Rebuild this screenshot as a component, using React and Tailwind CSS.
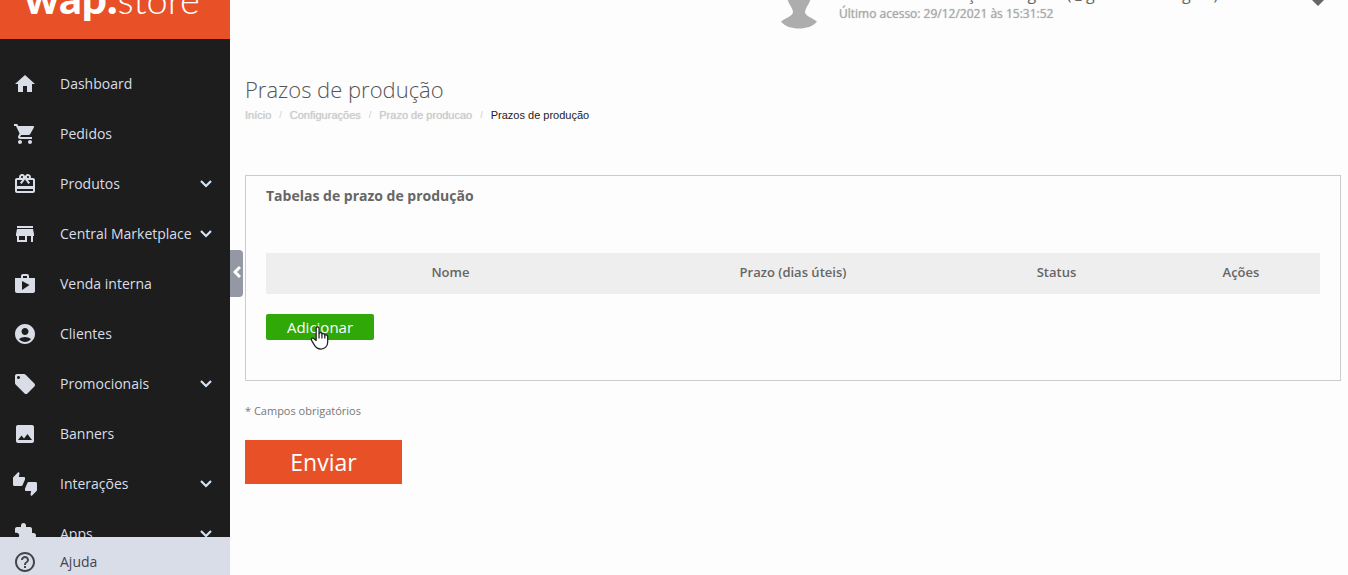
import React, { useState } from "react";
import {
  MdAccountCircle,
  MdCardGiftcard,
  MdExtension,
  MdHelpOutline,
  MdHome,
  MdImage,
  MdLocalOffer,
  MdShop,
  MdShoppingCart,
  MdStore,
  MdThumbsUpDown,
} from "react-icons/md";

const menu = [
  { label: "Dashboard", icon: MdHome },
  { label: "Pedidos", icon: MdShoppingCart },
  { label: "Produtos", icon: MdCardGiftcard, sub: true },
  { label: "Central Marketplace", icon: MdStore, sub: true },
  { label: "Venda interna", icon: MdShop },
  { label: "Clientes", icon: MdAccountCircle },
  { label: "Promocionais", icon: MdLocalOffer, sub: true },
  { label: "Banners", icon: MdImage },
  { label: "Interações", icon: MdThumbsUpDown, sub: true },
  { label: "Apps", icon: MdExtension, sub: true },
];

const crumbs = ["Início", "Configurações", "Prazo de producao"];

const columns = [
  { label: "Nome", width: "w-[35%]" },
  { label: "Prazo (dias úteis)", width: "w-[30%]" },
  { label: "Status", width: "w-[20%]" },
  { label: "Ações", width: "w-[15%]" },
];

const MenuItem = ({ label, icon: Icon, sub }) => (
  <li>
    <a href="#" className="flex h-[50px] items-center pl-[13px] pr-[18px] text-sm text-[#d9dde8]">
      <Icon className="size-6 shrink-0" />
      <span className="ml-[23px] flex-1 whitespace-nowrap">{label}</span>
      {sub && (
        <svg viewBox="0 0 12 8" className="h-2 w-3 shrink-0" fill="none" stroke="#d4e4f7" strokeWidth="2.200">
          <path d="m1 1 5 5 5-5" />
        </svg>
      )}
    </a>
  </li>
);

const Sidebar = () => (
  <aside className="flex w-[230px] shrink-0 flex-col bg-[#1d1d1d]">
    {/* Logo */}
    <div className="flex h-[39px] shrink-0 items-end overflow-hidden bg-[#e85127] pb-[22px] pl-6">
      <a href="#" className="flex items-baseline font-[Lato,sans-serif] leading-9 text-white">
        <span className="text-[44px] leading-9 font-black">wap.</span>
        <span className="text-[38px] leading-9 font-light">store</span>
      </a>
    </div>

    <nav className="min-h-0 flex-1 overflow-hidden pt-5">
      <ul>
        {menu.map((item) => (
          <MenuItem key={item.label} {...item} />
        ))}
      </ul>
    </nav>

    {/* Help */}
    <a href="#" className="-mb-3 flex h-[50px] shrink-0 items-center bg-[#d9dde8] pl-[13px] text-sm text-[#44444c]">
      <MdHelpOutline className="size-6" />
      <span className="ml-[23px]">Ajuda</span>
    </a>
  </aside>
);

const UserHeader = () => (
  <header className="-mt-4 flex h-[61px] shrink-0 items-start pl-[551px] pr-[23px]">
    <svg viewBox="0 0 36 44" className="h-[45px] w-9 shrink-0" fill="#adadad">
      <path d="M18 1C11 1 6 6 6 11c0 4 2 8 4 11 1 2 2 4 2 6-1 4-7 5-12 9C4 42 11 44 18 44s14-2 18-7c-5-4-11-5-12-9 0-2 1-4 2-6 2-3 4-7 4-11C30 6 25 1 18 1Z" />
    </svg>
    <div className="ml-[22px] flex-1 whitespace-nowrap">
      <p className="text-base leading-5 text-[#666]">
        Mariana Mendonça Rodrigues (@gabrielasomiguel)
      </p>
      <p className="text-xs leading-5 text-[#aaa] text-shadow-[0_0_1px_#aaa]">
        Último acesso: 29/12/2021 às 15:31:52
      </p>
    </div>
    <button aria-label="Menu do usuário" className="pt-2">
      <svg viewBox="0 0 14 14" className="size-3.5" fill="#666">
        <path d="M7 14 0 7l3-3 4 4 4-4 3 3z" />
      </svg>
    </button>
  </header>
);

const PointerHand = () => (
  <svg
    viewBox="0 0 20 25"
    className="pointer-events-none absolute left-11 top-3 h-6 w-5"
    fill="#fff"
    stroke="#222"
    strokeWidth="1.300"
    strokeLinejoin="round"
  >
    <path d="M6 15V2.500C6 .500 9 .500 9 2.500V8c0-1.500 3-1.500 3 .500v.500c0-1.500 3-1.500 3 .500v.500c0-1.500 3-1 3 1V17c0 4-3 7-7 7-3 0-5-1-6.500-3.500L1.200 15c-1-2 1-3 2.300-2z" />
    <path d="M9 8v5M12 9v4M15 10v3" fill="none" />
  </svg>
);

const App = () => {
  const [open, setOpen] = useState(true);

  return (
    <div className="flex h-screen overflow-hidden bg-[#fdfdfd] font-['Open_Sans',sans-serif]">
      {open && <Sidebar />}

      <div className="relative flex min-w-0 flex-1 flex-col">
        <button
          onClick={() => setOpen(!open)}
          aria-label="Recolher menu"
          className="absolute left-0 top-[250px] flex h-[47px] w-[13px] items-center justify-center rounded-r-sm bg-[#9498a4] pb-1"
        >
          <svg viewBox="0 0 8 12" className="h-3 w-2" fill="none" stroke="#fff" strokeWidth="3">
            <path d="M7 1 2 6l5 5" />
          </svg>
        </button>

        <UserHeader />

        <main className="pl-[15px] pr-[7px] pt-7">
          <h1 className="text-[22px] font-light leading-8 text-[#555]">
            Prazos de produção
          </h1>
          <nav className="font-['Liberation_Sans',sans-serif] text-[11px] leading-5">
            <ol className="flex">
              {crumbs.map((crumb) => (
                <li key={crumb} className="flex text-[#ccc]">
                  <a href="#" className="text-shadow-[0_0_1px_#ccc]">{crumb}</a>
                  <span className="px-2 text-[9px]">/</span>
                </li>
              ))}
              <li className="text-[#222]">Prazos de produção</li>
            </ol>
          </nav>

          <form onSubmit={(e) => e.preventDefault()}>
            {/* Tables */}
            <section className="mt-[50px] border border-[#ccc] px-5 pb-10 pt-2.5">
              <h2 className="text-sm font-bold leading-5 text-[#666]">
                Tabelas de prazo de produção
              </h2>
              <table className="mt-[47px] w-full table-fixed bg-[#eee]">
                <thead>
                  <tr>
                    {columns.map((col) => (
                      <th
                        key={col.label}
                        className={`h-[41px] pb-0.5 text-center text-[13px] font-semibold text-[#666] ${col.width}`}
                      >
                        {col.label}
                      </th>
                    ))}
                  </tr>
                </thead>
              </table>
              <div className="relative mt-5 flex">
                <button
                  type="button"
                  className="h-[26px] w-[108px] rounded-xs bg-[#2fa808] text-[15px] leading-6 text-white"
                >
                  Adicionar
                </button>
                <PointerHand />
              </div>
            </section>

            <p className="mt-5 text-[11px] leading-5 text-[#777]">* Campos obrigatórios</p>
            <button type="submit" className="mt-[19px] h-11 w-[157px] bg-[#e85127] text-[23px] text-white">
              Enviar
            </button>
          </form>
        </main>
      </div>
    </div>
  );
};

export default App;
